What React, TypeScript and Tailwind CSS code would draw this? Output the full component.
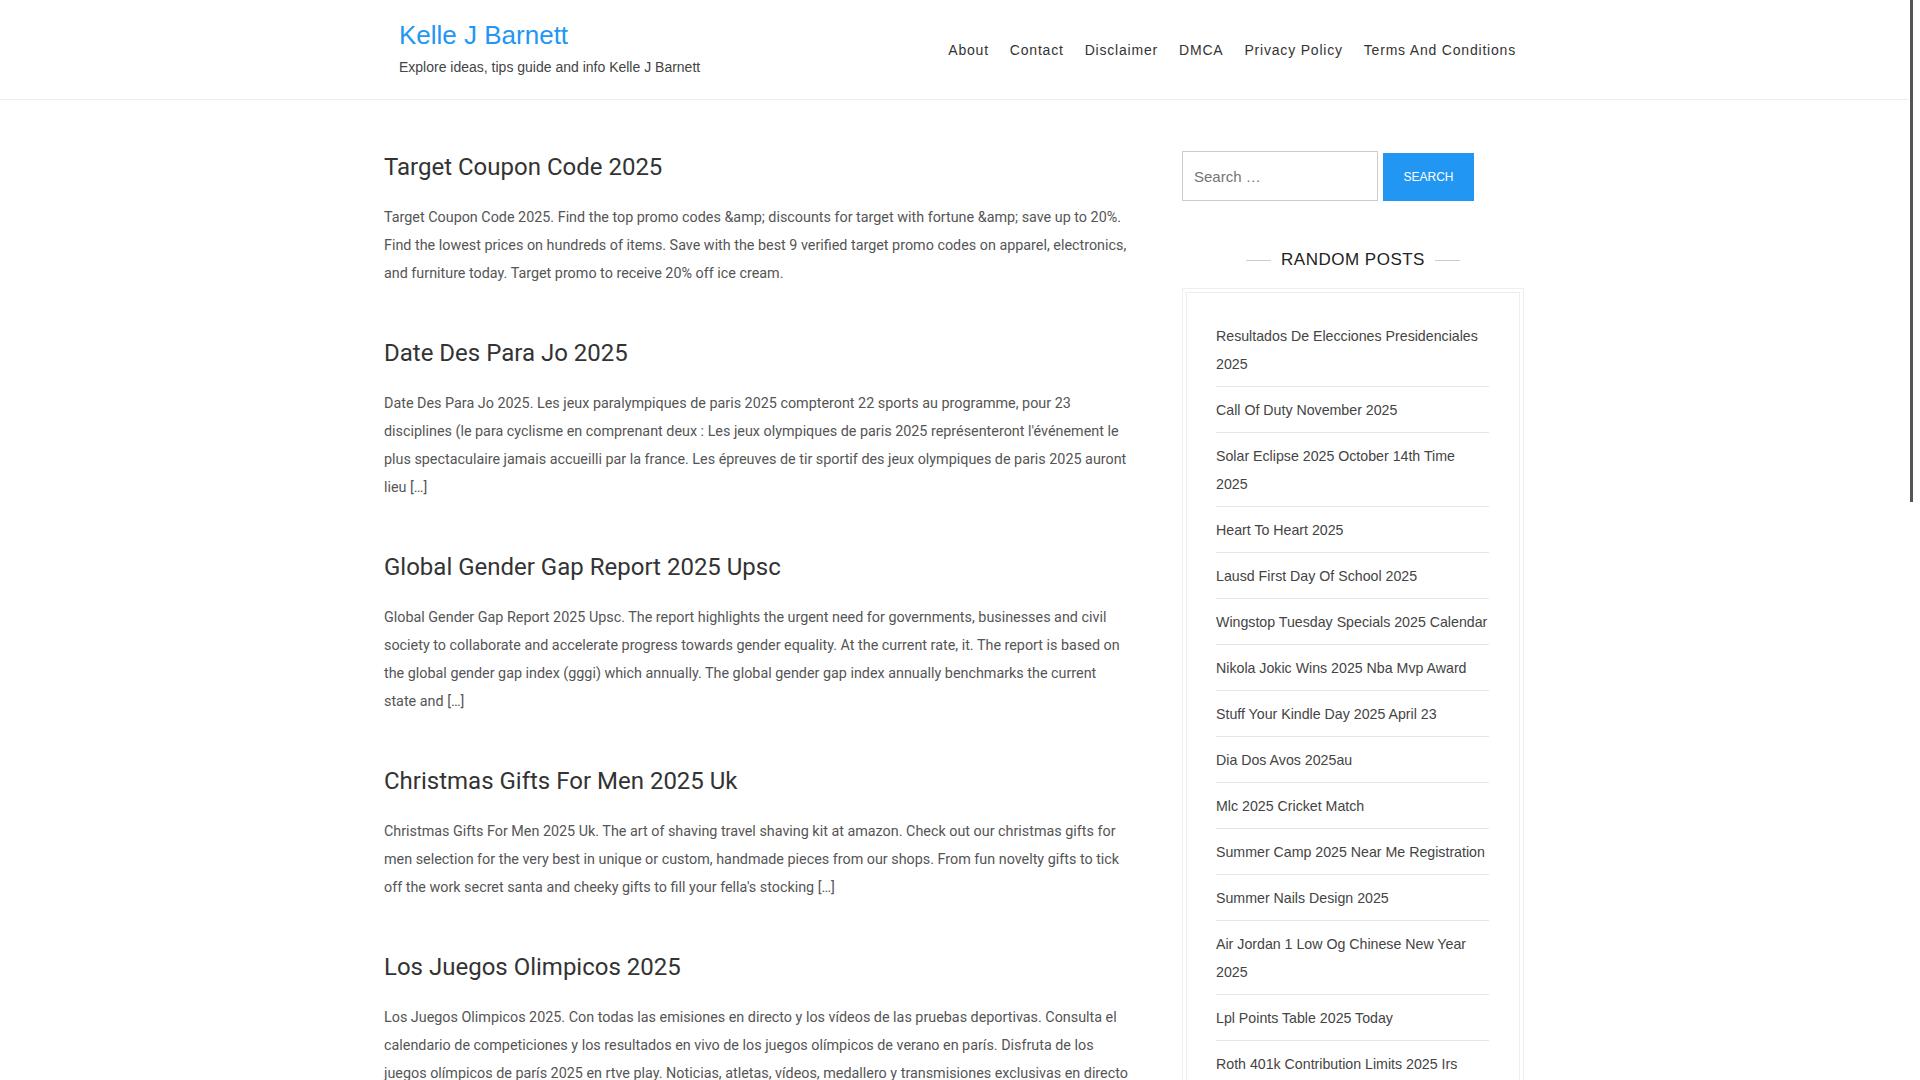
const navItems = ['About', 'Contact', 'Disclaimer', 'DMCA', 'Privacy Policy', 'Terms And Conditions']

const posts = [
  {
    title: 'Target Coupon Code 2025',
    excerpt:
      'Target Coupon Code 2025. Find the top promo codes &amp; discounts for target with fortune &amp; save up to 20%. Find the lowest prices on hundreds of items. Save with the best 9 verified target promo codes on apparel, electronics, and furniture today. Target promo to receive 20% off ice cream.',
  },
  {
    title: 'Date Des Para Jo 2025',
    excerpt:
      "Date Des Para Jo 2025. Les jeux paralympiques de paris 2025 compteront 22 sports au programme, pour 23 disciplines (le para cyclisme en comprenant deux : Les jeux olympiques de paris 2025 représenteront l'événement le plus spectaculaire jamais accueilli par la france. Les épreuves de tir sportif des jeux olympiques de paris 2025 auront lieu […]",
  },
  {
    title: 'Global Gender Gap Report 2025 Upsc',
    excerpt:
      'Global Gender Gap Report 2025 Upsc. The report highlights the urgent need for governments, businesses and civil society to collaborate and accelerate progress towards gender equality. At the current rate, it. The report is based on the global gender gap index (gggi) which annually. The global gender gap index annually benchmarks the current state and […]',
  },
  {
    title: 'Christmas Gifts For Men 2025 Uk',
    excerpt:
      "Christmas Gifts For Men 2025 Uk. The art of shaving travel shaving kit at amazon. Check out our christmas gifts for men selection for the very best in unique or custom, handmade pieces from our shops. From fun novelty gifts to tick off the work secret santa and cheeky gifts to fill your fella's stocking […]",
  },
  {
    title: 'Los Juegos Olimpicos 2025',
    excerpt:
      'Los Juegos Olimpicos 2025. Con todas las emisiones en directo y los vídeos de las pruebas deportivas. Consulta el calendario de competiciones y los resultados en vivo de los juegos olímpicos de verano en parís. Disfruta de los juegos olímpicos de parís 2025 en rtve play. Noticias, atletas, vídeos, medallero y transmisiones exclusivas en directo de todos los deportes […]',
  },
]

const randomPosts = [
  'Resultados De Elecciones Presidenciales 2025',
  'Call Of Duty November 2025',
  'Solar Eclipse 2025 October 14th Time 2025',
  'Heart To Heart 2025',
  'Lausd First Day Of School 2025',
  'Wingstop Tuesday Specials 2025 Calendar',
  'Nikola Jokic Wins 2025 Nba Mvp Award',
  'Stuff Your Kindle Day 2025 April 23',
  'Dia Dos Avos 2025au',
  'Mlc 2025 Cricket Match',
  'Summer Camp 2025 Near Me Registration',
  'Summer Nails Design 2025',
  'Air Jordan 1 Low Og Chinese New Year 2025',
  'Lpl Points Table 2025 Today',
  'Roth 401k Contribution Limits 2025 Irs',
]

function Header() {
  return (
    <header className="border-b border-[#eee] bg-white">
      <div className="mx-auto flex h-[99px] w-[1140px] items-center justify-between">
        <div className="pl-[15px] pb-[4px]">
          <a href="#" className="block text-[26px] leading-[31px] text-[#2196f3]">
            Kelle J Barnett
          </a>
          <p className="mt-[8px] text-[14px] leading-[17px] text-[#444]">
            Explore ideas, tips guide and info Kelle J Barnett
          </p>
        </div>
        <nav className="flex items-center">
          {navItems.map(item => (
            <a
              key={item}
              href="#"
              className="px-[10.5px] text-[14px] leading-[20px] tracking-[0.8px] text-[#333] last:pr-[8px]"
            >
              {item}
            </a>
          ))}
        </nav>
      </div>
    </header>
  )
}

function Sidebar() {
  return (
    <aside className="w-[342px] pt-[1px] font-['Liberation_Sans',Arial,sans-serif]">
      <form className="flex items-end gap-[5px]" onSubmit={e => e.preventDefault()}>
        <input
          type="search"
          placeholder="Search …"
          className="h-[50px] w-[196px] border border-[#ccc] px-[11px] text-[15px] text-[#333] outline-none placeholder:text-[#757575]"
        />
        <button
          type="submit"
          className="h-[48px] w-[91px] bg-[#2196f3] text-[12px] uppercase text-white"
        >
          Search
        </button>
      </form>

      <div className="mt-[47px] flex items-center justify-center gap-[10px]">
        <span className="h-px w-[25px] bg-[#ccc]" />
        <h3 className="text-[17px] leading-[24px] tracking-[0.5px] text-[#222] uppercase">
          Random Posts
        </h3>
        <span className="h-px w-[25px] bg-[#ccc]" />
      </div>

      <div className="mt-[16px] border border-[#eee] p-[3px]">
        <ul className="border border-[#eee] pl-[29px] pr-[30px] pt-[20px]">
          {randomPosts.map(title => (
            <li
              key={title}
              className="border-b border-[#e5e5e5] pt-[9px] pb-[8px] text-[14.2px] leading-[28px] text-[#444]"
            >
              <a href="#">{title}</a>
            </li>
          ))}
        </ul>
      </div>
    </aside>
  )
}

export default function App() {
  return (
    <div className="flex min-h-screen bg-white font-['Liberation_Sans',Arial,sans-serif]">
      <div className="flex-1">
        <Header />
        <main className="mx-auto flex w-[1140px] justify-between pt-[50px]">
          <div className="w-[745px] pt-[1px] font-['Roboto','Liberation_Sans',sans-serif]">
            {posts.map(post => (
              <article key={post.title} className="mb-[49px]">
                <h2 className="text-[24px] leading-[32px] font-normal text-[#333]">
                  <a href="#">{post.title}</a>
                </h2>
                <p className="mt-[21px] text-[14.35px] leading-[28px] text-[#555]">{post.excerpt}</p>
              </article>
            ))}
          </div>
          <Sidebar />
        </main>
      </div>
      <div className="sticky top-0 flex h-screen w-[12px] shrink-0 bg-white">
        <div className="ml-[2px] h-[502px] w-[3px] bg-[#555]" />
      </div>
    </div>
  )
}
